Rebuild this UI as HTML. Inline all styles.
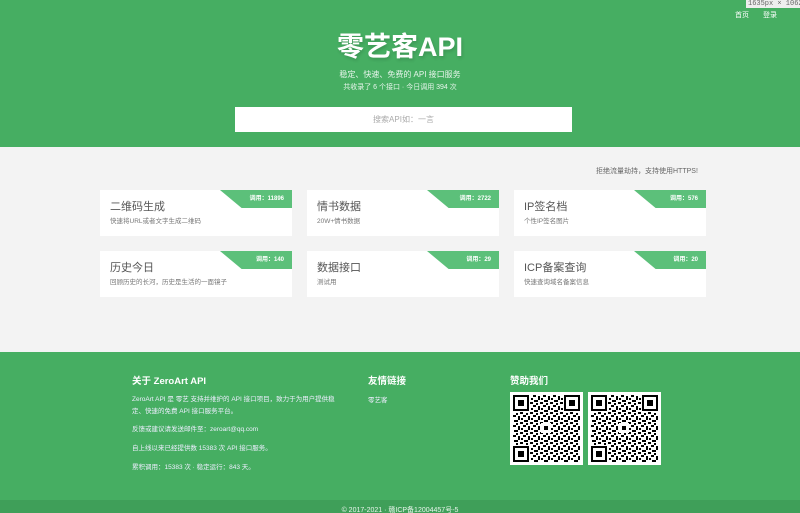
<!DOCTYPE html>
<html><head><meta charset="utf-8"><style>
*{margin:0;padding:0;box-sizing:border-box}
html,body{width:800px;height:513px;overflow:hidden}
body{font-family:"Liberation Sans","Noto Sans CJK SC",sans-serif;background:#f3f3f3;position:relative}
.hdr{position:absolute;left:0;top:0;width:800px;height:147px;background:#46ae62}
.dim{position:absolute;right:0;top:0;width:54px;height:8px;background:#eee;font:7px "Liberation Mono",monospace;color:#666;line-height:8px;padding-left:2px;white-space:nowrap;overflow:hidden}
.nav{position:absolute;top:10px;font-size:7px;color:#fff}
h1{position:absolute;left:0;width:800px;top:30px;line-height:34px;text-align:center;color:#fff;font-size:27px;font-weight:bold;text-shadow:1px 2px 3px rgba(0,0,0,.15)}
.sub{position:absolute;width:800px;text-align:center;color:#e8f5ec;font-size:8px}
.search{position:absolute;left:235px;top:107px;width:337px;height:25px;background:#fff;text-align:center;font-size:8px;color:#aaa;line-height:25px}
.note{position:absolute;left:596px;top:166px;font-size:7px;color:#666}
.card{position:absolute;width:192px;height:46px;background:#fff}
.card .t{position:absolute;left:10px;top:8px;font-size:11px;color:#555}
.card .d{position:absolute;left:10px;top:25px;font-size:6.5px;color:#777}
.rb{position:absolute;right:0;top:0;width:72px;height:18px;background:#5cc07a;clip-path:polygon(0 0,100% 0,100% 100%,30% 100%);color:#fff;font-size:6px;font-weight:bold;text-align:right;padding-right:8px;line-height:18px}
.ft{position:absolute;left:0;top:352px;width:800px;height:148px;background:#46ae62;color:#fff}
.ft h3{position:absolute;font-size:9.5px;font-weight:bold;top:21px}
.ft p{position:absolute;font-size:6.5px;color:#eef}
.bot{position:absolute;left:0;top:500px;width:800px;height:13px;background:#3f9f59;text-align:center;color:#e9f5ec;font-size:7px;line-height:22px;overflow:hidden}
.qr{position:absolute;top:392px;width:73px;height:73px;background:#fff;padding:3px}
</style></head><body>
<div class="hdr">
<div class="dim">1635px × 1062</div>
<div class="nav" style="left:735px">首页</div>
<div class="nav" style="left:763px">登录</div>
<h1>零艺客API</h1>
<div class="sub" style="top:69px;left:0">稳定、快速、免费的 API 接口服务</div>
<div class="sub" style="top:82px;left:0;font-size:7px">共收录了 6 个接口 · 今日调用 394 次</div>
<div class="search">搜索API如：一言</div>
</div>
<div class="note">拒绝流量劫持，支持使用HTTPS!</div>

<div class="card" style="left:100px;top:190px"><div class="t">二维码生成</div><div class="d">快速将URL或者文字生成二维码</div><div class="rb">调用：11896</div></div>
<div class="card" style="left:307px;top:190px"><div class="t">情书数据</div><div class="d">20W+情书数据</div><div class="rb">调用：2722</div></div>
<div class="card" style="left:514px;top:190px"><div class="t">IP签名档</div><div class="d">个性IP签名图片</div><div class="rb">调用：576</div></div>
<div class="card" style="left:100px;top:251px"><div class="t">历史今日</div><div class="d">回顾历史的长河，历史是生活的一面镜子</div><div class="rb">调用：140</div></div>
<div class="card" style="left:307px;top:251px"><div class="t">数据接口</div><div class="d">测试用</div><div class="rb">调用：29</div></div>
<div class="card" style="left:514px;top:251px"><div class="t">ICP备案查询</div><div class="d">快速查询域名备案信息</div><div class="rb">调用：20</div></div>

<div class="ft">
<h3 style="left:132px">关于 ZeroArt API</h3>
<h3 style="left:368px">友情链接</h3>
<h3 style="left:510px">赞助我们</h3>
<p style="left:132px;top:42px;width:205px;line-height:12px">ZeroArt API 是 零艺 支持并维护的 API 接口项目，致力于为用户提供稳定、快速的免费 API 接口服务平台。</p>
<p style="left:132px;top:71px">反馈或建议请发送邮件至：zeroart@qq.com</p>
<p style="left:132px;top:90px">自上线以来已经提供数 15383 次 API 接口服务。</p>
<p style="left:132px;top:109px">累积调用：15383 次 · 稳定运行：843 天。</p>
<p style="left:368px;top:42px">零艺客</p>
</div>
<svg width="0" height="0" style="position:absolute"><defs>
<pattern id="q" width="10" height="10" patternUnits="userSpaceOnUse">
<rect x="0" y="0" width="3" height="2" fill="#000"/><rect x="5" y="1" width="2" height="4" fill="#000"/><rect x="1" y="5" width="4" height="2" fill="#000"/><rect x="7" y="7" width="3" height="2" fill="#000"/><rect x="3" y="8" width="2" height="2" fill="#000"/><rect x="8" y="3" width="2" height="2" fill="#000"/>
</pattern>
<g id="qg"><rect width="67" height="67" fill="url(#q)"/>
<g fill="#fff"><rect x="0" y="0" width="17" height="17"/><rect x="50" y="0" width="17" height="17"/><rect x="0" y="50" width="17" height="17"/><rect x="28" y="28" width="10" height="10"/></g>
<g fill="none" stroke="#000" stroke-width="2"><rect x="1" y="1" width="14" height="14"/><rect x="52" y="1" width="14" height="14"/><rect x="1" y="52" width="14" height="14"/></g>
<g fill="#000"><rect x="5" y="5" width="6" height="6"/><rect x="56" y="5" width="6" height="6"/><rect x="5" y="56" width="6" height="6"/><rect x="31" y="31" width="4" height="4"/></g></g>
</defs></svg>
<div class="qr" style="left:510px"><svg width="67" height="67"><use href="#qg"/></svg></div>
<div class="qr" style="left:588px"><svg width="67" height="67"><use href="#qg"/></svg></div>
<div class="bot">© 2017-2021 · 赣ICP备12004457号-5</div>
</body></html>
